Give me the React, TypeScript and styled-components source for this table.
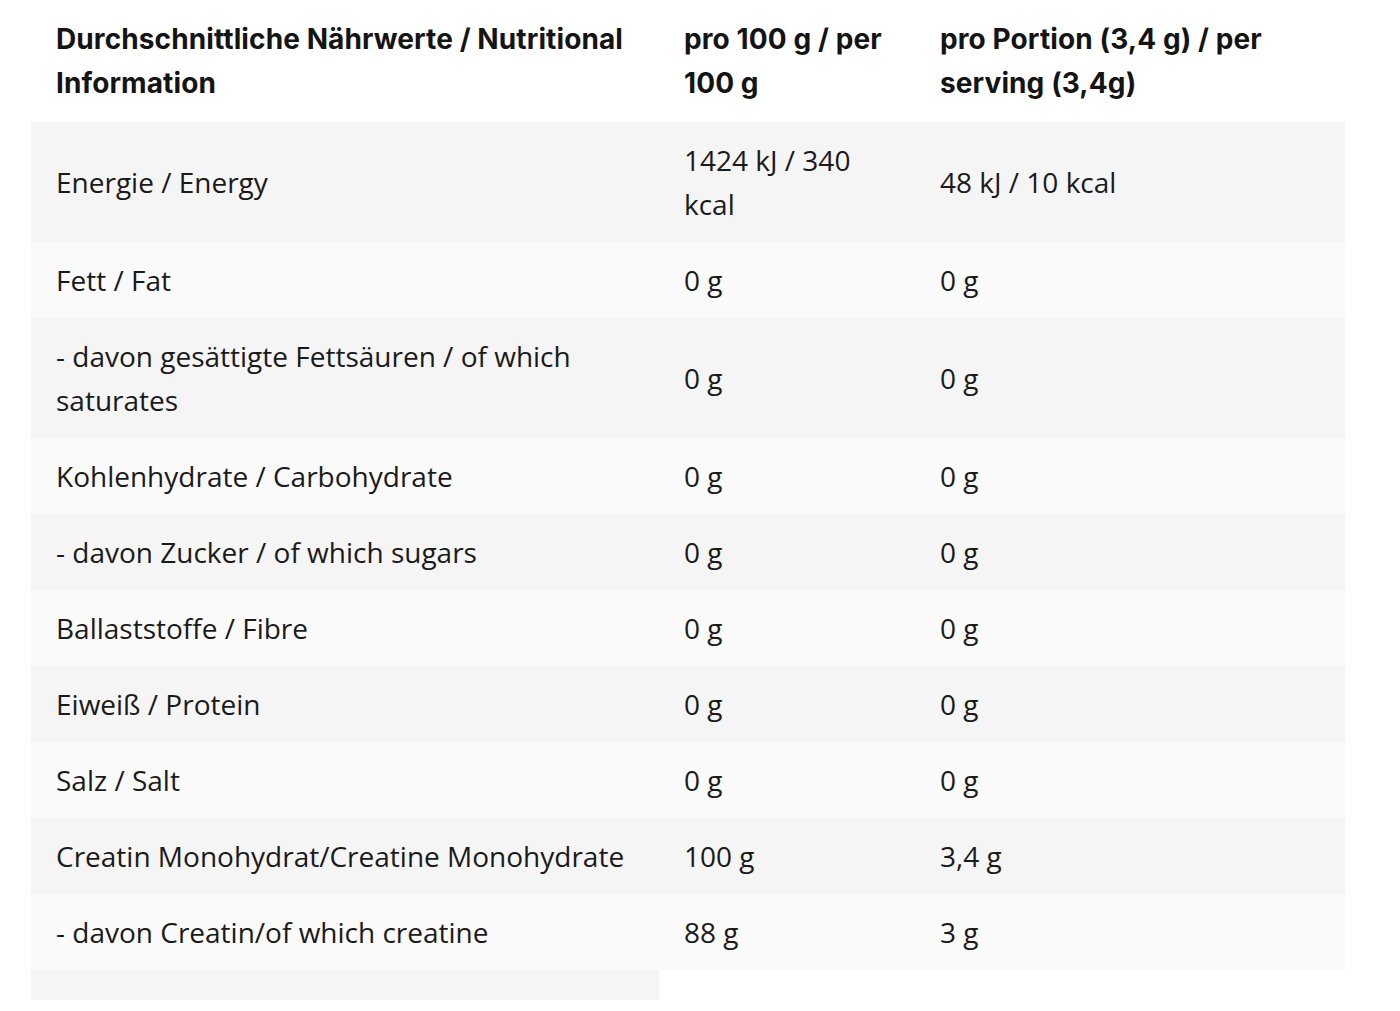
import styled, { createGlobalStyle } from "styled-components";

interface Row {
  label: string;
  per100: string;
  perServing: string;
}

const rows: Row[] = [
  { label: "Energie / Energy", per100: "1424 kJ / 340 kcal", perServing: "48 kJ / 10 kcal" },
  { label: "Fett / Fat", per100: "0 g", perServing: "0 g" },
  { label: "- davon gesättigte Fettsäuren / of which saturates", per100: "0 g", perServing: "0 g" },
  { label: "Kohlenhydrate / Carbohydrate", per100: "0 g", perServing: "0 g" },
  { label: "- davon Zucker / of which sugars", per100: "0 g", perServing: "0 g" },
  { label: "Ballaststoffe / Fibre", per100: "0 g", perServing: "0 g" },
  { label: "Eiweiß / Protein", per100: "0 g", perServing: "0 g" },
  { label: "Salz / Salt", per100: "0 g", perServing: "0 g" },
  { label: "Creatin Monohydrat/Creatine Monohydrate", per100: "100 g", perServing: "3,4 g" },
  { label: "- davon Creatin/of which creatine", per100: "88 g", perServing: "3 g" },
];

const GlobalStyle = createGlobalStyle`
  html, body {
    margin: 0;
    padding: 0;
    background: #fff;
  }
  body {
    font-family: "Open Sans", "Liberation Sans", sans-serif;
    color: #1a1a1a;
  }
`;

const App = () => {
  return (
    <>
      <GlobalStyle />
      <Page>
        <NutritionTable>
          <colgroup>
            <col style={{ width: 628 }} />
            <col style={{ width: 256 }} />
            <col style={{ width: 430 }} />
          </colgroup>
          <thead>
            <tr>
              <HeadCell>Durchschnittliche Nährwerte / Nutritional Information</HeadCell>
              <HeadCell>pro 100 g / per 100 g</HeadCell>
              <HeadCell>pro Portion (3,4 g) / per serving (3,4g)</HeadCell>
            </tr>
          </thead>
          <tbody>
            {rows.map((row, i) => (
              <BodyRow key={row.label} $odd={i % 2 === 0}>
                <Cell>{row.label}</Cell>
                <Cell>{row.per100}</Cell>
                <Cell>{row.perServing}</Cell>
              </BodyRow>
            ))}
            <tr>
              <EmptyCell />
            </tr>
          </tbody>
        </NutritionTable>
      </Page>
    </>
  );
};

const Page = styled.div`
  padding: 0 55px 0 31px;
`;

const NutritionTable = styled.table`
  width: 1314px;
  border-collapse: collapse;
  border-spacing: 0;
  table-layout: fixed;
`;

const HeadCell = styled.th`
  text-align: left;
  vertical-align: middle;
  padding: 17px 25px;
  font-family: "Inter", "Roboto", "Liberation Sans", sans-serif;
  font-weight: 700;
  font-size: 28px;
  line-height: 44px;
  letter-spacing: 0.1px;
  color: #141414;
`;

const BodyRow = styled.tr<{ $odd: boolean }>`
  background: ${(p) => (p.$odd ? "#f5f5f5" : "#fafafa")};
`;

const Cell = styled.td`
  padding: 16px 25px;
  vertical-align: middle;
  font-size: 28px;
  line-height: 44px;
  color: #1a1a1a;
`;

const EmptyCell = styled.td`
  height: 30px;
  padding: 0;
  background: #f5f5f5;
`;

export default App;
